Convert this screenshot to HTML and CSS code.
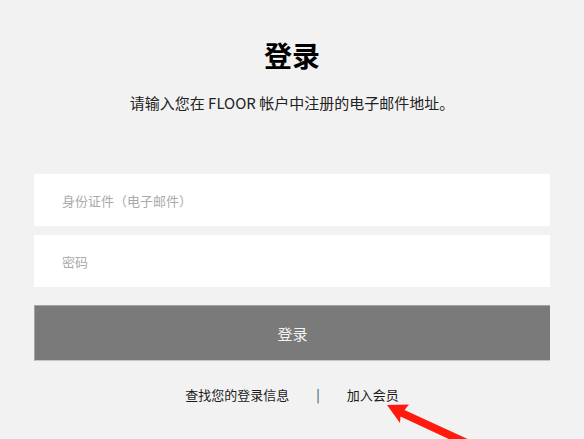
FILE: index.html
```html
<!DOCTYPE html>
<html lang="zh-CN">
<head>
<meta charset="utf-8">
<title>登录</title>
<link rel="stylesheet" href="styles.css">
</head>
<body>
<main class="page">
  <h1 class="title">登录</h1>
  <p class="subtitle">请输入您在 FLOOR 帐户中注册的电子邮件地址。</p>
  <form class="form">
    <input class="field" type="text" placeholder="身份证件（电子邮件）">
    <input class="field" type="password" placeholder="密码">
    <button class="submit" type="button">登录</button>
  </form>
  <nav class="links">
    <a class="link" href="#">查找您的登录信息</a>
    <span class="sep">|</span>
    <a class="link" href="#">加入会员</a>
  </nav>
</main>
<svg class="arrow" width="584" height="439" viewBox="0 0 584 439">
  <polygon fill="#ff1a0d" points="387,405 409,404.5 404.5,410 472,441 468,448 400.5,416.5 400,423"/>
</svg>
</body>
</html>
```

FILE: styles.css
```css
html, body {
  margin: 0;
  padding: 0;
  background: #f2f2f2;
  height: 100%;
  overflow: hidden;
}
body {
  font-family: "Noto Sans CJK SC", "Noto Sans", sans-serif;
  color: #1a1a1a;
}
.page {
  width: 516px;
  margin: 0 auto;
  padding-top: 38px;
  display: flex;
  flex-direction: column;
  align-items: stretch;
}
.title {
  margin: 0;
  height: 34px;
  line-height: 34px;
  font-size: 28px;
  font-weight: 700;
  text-align: center;
  color: #000;
}
.subtitle {
  margin: 20px 0 0;
  height: 22px;
  line-height: 22px;
  font-size: 15px;
  text-align: center;
  color: #222;
}
.form {
  margin-top: 60px;
  display: flex;
  flex-direction: column;
}
.field {
  box-sizing: border-box;
  height: 52px;
  border: none;
  outline: none;
  background: #fff;
  padding: 0 0 0 28px;
  font-family: inherit;
  font-size: 13px;
  color: #333;
  margin: 0 0 9px;
}
.field::placeholder {
  color: #aaa;
}
.field + .field {
  margin-bottom: 18px;
}
.submit {
  box-sizing: border-box;
  height: 56px;
  margin: 0;
  border: 1px solid #a4a4a4;
  border-right: none;
  border-bottom-color: #c6c6c6;
  background: #7a7a7a;
  color: #f4f4f4;
  font-family: inherit;
  font-size: 15px;
  padding: 0;
  cursor: pointer;
}
.links {
  margin-top: 24px;
  display: flex;
  justify-content: center;
  gap: 27px;
  height: 20px;
  line-height: 20px;
  font-size: 13px;
}
.link {
  color: #1a1a1a;
  text-decoration: none;
}
.sep {
  color: #243a52;
}
.arrow {
  position: absolute;
  left: 0;
  top: 0;
  pointer-events: none;
}
```
